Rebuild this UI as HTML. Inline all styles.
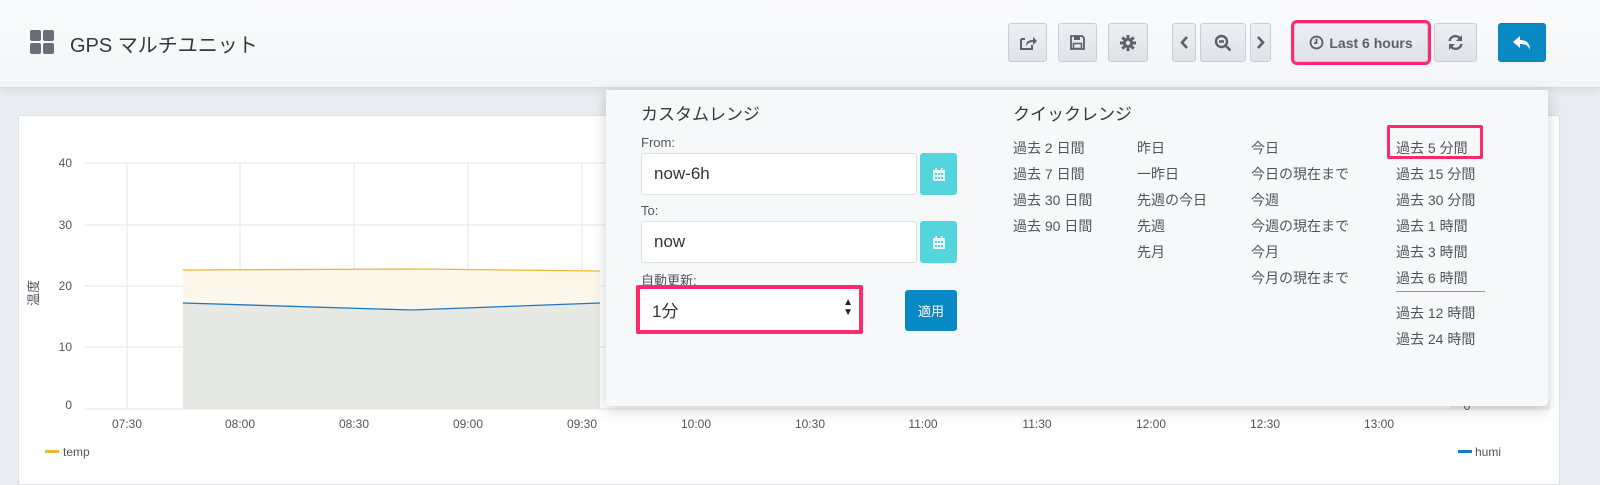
<!DOCTYPE html><html><head><meta charset="utf-8"><style>
*{box-sizing:border-box;margin:0;padding:0}
body{width:1600px;height:480px;overflow:hidden;background:#e9ecf0;font-family:"Liberation Sans","Noto Sans CJK JP",sans-serif;color:#52545c;position:relative}
.abs{position:absolute}
.hdr{left:0;top:0;width:1600px;height:88px;background:linear-gradient(#fafbfc,#f4f5f8);border-bottom:1px solid #d8dbe0;box-shadow:0 2px 8px rgba(0,0,0,.08)}
.btn{position:absolute;top:23px;height:39px;background:linear-gradient(#eceef2,#dfe3e9);border:1px solid #c9ced6;border-radius:3px;display:flex;align-items:center;justify-content:center;color:#5d6068}
.panel{left:18px;top:115px;width:1542px;height:370px;background:#fff;border:1px solid #dde0e5;border-radius:3px}
.lbl{font-size:13px;color:#52545c}
.dd{left:606px;top:90px;width:942px;height:316px;background:#f7f8fa;border-radius:0 0 4px 4px;box-shadow:0 4px 14px rgba(0,0,0,.18)}
.inp{position:absolute;background:#fff;border:1px solid #dcdfe4;border-radius:3px;font-size:17px;color:#33353b;padding-left:12px;display:flex;align-items:center}
.cal{position:absolute;width:37px;height:42px;background:#54d4dc;border-radius:3px;display:flex;align-items:center;justify-content:center}
.q{position:absolute;font-size:14px;color:#52545c;white-space:nowrap}
</style></head><body>
<div class="abs hdr"></div>
<div class="abs" style="left:30px;top:30px;width:24px;height:24px">
<div class="abs" style="left:0;top:0;width:11px;height:11px;background:#6b6e75;border-radius:2px"></div>
<div class="abs" style="left:13px;top:0;width:11px;height:11px;background:#6b6e75;border-radius:2px"></div>
<div class="abs" style="left:0;top:13px;width:11px;height:11px;background:#6b6e75;border-radius:2px"></div>
<div class="abs" style="left:13px;top:13px;width:11px;height:11px;background:#6b6e75;border-radius:2px"></div></div>
<div class="abs" style="left:70px;top:29px;font-size:20px;color:#35373d">GPS マルチユニット</div>

<div class="btn" style="left:1008px;width:39px"><svg width="18" height="16" viewBox="0 0 18 16"><path d="M2 4h4M2 4v10h11v-4" fill="none" stroke="#5d6068" stroke-width="2"/><path d="M7 11c0-5 3-6 7-6V2l4 4-4 4V7c-3 0-5 1-7 4z" fill="#5d6068"/></svg></div>
<div class="btn" style="left:1058px;width:39px"><svg width="15" height="15" viewBox="0 0 15 15"><path d="M1 1h11l2 2v11H1z" fill="none" stroke="#5d6068" stroke-width="1.8"/><rect x="4" y="1" width="6" height="4" fill="#5d6068"/><rect x="3.5" y="8.5" width="8" height="5" fill="none" stroke="#5d6068" stroke-width="1.5"/></svg></div>
<div class="btn" style="left:1108px;width:40px"><svg width="16" height="16" viewBox="0 0 16 16"><circle cx="8" cy="8" r="5" fill="#5d6068"/><g stroke="#5d6068" stroke-width="3"><path d="M8 0v16M0 8h16M2.3 2.3l11.4 11.4M13.7 2.3L2.3 13.7"/></g><circle cx="8" cy="8" r="2.2" fill="#e4e7ec"/></svg></div>
<div class="btn" style="left:1172px;width:24px"><svg width="8" height="13" viewBox="0 0 8 13"><path d="M7 1L2 6.5 7 12" fill="none" stroke="#5d6068" stroke-width="2.6"/></svg></div>
<div class="btn" style="left:1200px;width:46px"><svg width="18" height="18" viewBox="0 0 18 18"><circle cx="7.5" cy="7.5" r="5.5" fill="none" stroke="#5d6068" stroke-width="2.4"/><path d="M5 7.5h5M11.5 11.5l5 5" stroke="#5d6068" stroke-width="2.6"/></svg></div>
<div class="btn" style="left:1250px;width:21px"><svg width="8" height="13" viewBox="0 0 8 13"><path d="M1 1l5 5.5L1 12" fill="none" stroke="#5d6068" stroke-width="2.6"/></svg></div>
<div class="btn" style="left:1294px;width:134px;font-size:14px;font-weight:bold;color:#5d6068;outline:3px solid #ff2a6b;outline-offset:0"><svg width="15" height="15" viewBox="0 0 15 15" style="margin-right:5px"><circle cx="7.5" cy="7.5" r="6" fill="none" stroke="#5d6068" stroke-width="1.8"/><path d="M7.5 3.5v4.5H5" fill="none" stroke="#5d6068" stroke-width="1.8"/></svg>Last 6 hours</div>
<div class="btn" style="left:1434px;width:43px"><svg width="17" height="17" viewBox="0 0 17 17"><path d="M2.5 7a6 6 0 0 1 11-2M14.5 10a6 6 0 0 1-11 2" fill="none" stroke="#5d6068" stroke-width="2.4"/><path d="M15 1v6h-6zM2 16v-6h6z" fill="#5d6068"/></svg></div>
<div class="btn" style="left:1498px;width:48px;background:#0a8ac4;border-color:#0a7fb5"><svg width="20" height="16" viewBox="0 0 20 16"><path d="M8 1L1 7l7 6V9c5 0 8 1 10 6 0-6-3-10-10-10z" fill="#fff"/></svg></div>

<div class="abs panel"></div>
<svg class="abs" style="left:0;top:0" width="1600" height="480">
<g stroke="#e4e6ea" stroke-width="1">
<line x1="85" y1="163" x2="1450" y2="163"/><line x1="85" y1="225" x2="1450" y2="225"/><line x1="85" y1="286" x2="1450" y2="286"/><line x1="85" y1="347" x2="1450" y2="347"/><line x1="85" y1="409" x2="1450" y2="409"/>
<line x1="127" y1="163" x2="127" y2="409"/><line x1="240" y1="163" x2="240" y2="409"/><line x1="354" y1="163" x2="354" y2="409"/><line x1="468" y1="163" x2="468" y2="409"/><line x1="582" y1="163" x2="582" y2="409"/>
</g>
<path d="M183 270L420 269 600 271 600 409 183 409z" fill="#fbf7ea"/>
<path d="M183 303L411 310 600 303 600 409 183 409z" fill="#e7e9e4"/>
<path d="M183 270L420 269 600 271" fill="none" stroke="#eab839" stroke-width="1.3"/>
<path d="M183 303L411 310 600 303" fill="none" stroke="#1f78c1" stroke-width="1.3"/>
<rect x="1450" y="400" width="100" height="10" fill="#eef0f2"/>
<g font-size="12" fill="#52545c" font-family="Liberation Sans">
<text x="72" y="167" text-anchor="end">40</text><text x="72" y="229" text-anchor="end">30</text><text x="72" y="290" text-anchor="end">20</text><text x="72" y="351" text-anchor="end">10</text><text x="72" y="409" text-anchor="end">0</text>
<text x="1467" y="410" text-anchor="middle">0</text>
<g text-anchor="middle"><text x="127" y="428">07:30</text><text x="240" y="428">08:00</text><text x="354" y="428">08:30</text><text x="468" y="428">09:00</text><text x="582" y="428">09:30</text><text x="696" y="428">10:00</text><text x="810" y="428">10:30</text><text x="923" y="428">11:00</text><text x="1037" y="428">11:30</text><text x="1151" y="428">12:00</text><text x="1265" y="428">12:30</text><text x="1379" y="428">13:00</text></g>
<text x="63" y="456">temp</text><text x="1475" y="456">humi</text></g>
<rect x="45" y="450" width="14" height="3" fill="#eab839"/><rect x="1458" y="450" width="14" height="3" fill="#1f78c1"/>
<text x="0" y="0" font-size="13" fill="#52545c" transform="translate(38,306) rotate(-90)" font-family="Liberation Sans,Noto Sans CJK JP,sans-serif">温度</text>
</svg>

<div class="abs dd">
<div class="abs" style="left:35px;top:10px;font-size:17px;color:#35373d">カスタムレンジ</div>
<div class="abs lbl" style="left:35px;top:45px">From:</div>
<div class="inp" style="left:35px;top:63px;width:276px;height:42px">now-6h</div>
<div class="cal" style="left:314px;top:63px"><svg width="12" height="13" viewBox="0 0 12 13"><rect x="0" y="2" width="12" height="11" fill="#fff" opacity=".85"/><g fill="#54d4dc"><rect x="2" y="5" width="2" height="2"/><rect x="5" y="5" width="2" height="2"/><rect x="8" y="5" width="2" height="2"/><rect x="2" y="9" width="2" height="2"/><rect x="5" y="9" width="2" height="2"/><rect x="8" y="9" width="2" height="2"/></g><rect x="2.5" y="0" width="1.5" height="3" fill="#fff"/><rect x="8" y="0" width="1.5" height="3" fill="#fff"/></svg></div>
<div class="abs lbl" style="left:35px;top:113px">To:</div>
<div class="inp" style="left:35px;top:131px;width:276px;height:42px">now</div>
<div class="cal" style="left:314px;top:131px"><svg width="12" height="13" viewBox="0 0 12 13"><rect x="0" y="2" width="12" height="11" fill="#fff" opacity=".85"/><g fill="#54d4dc"><rect x="2" y="5" width="2" height="2"/><rect x="5" y="5" width="2" height="2"/><rect x="8" y="5" width="2" height="2"/><rect x="2" y="9" width="2" height="2"/><rect x="5" y="9" width="2" height="2"/><rect x="8" y="9" width="2" height="2"/></g><rect x="2.5" y="0" width="1.5" height="3" fill="#fff"/><rect x="8" y="0" width="1.5" height="3" fill="#fff"/></svg></div>
<div class="abs lbl" style="left:35px;top:180px">自動更新:</div>
<div class="inp" style="left:30px;top:195px;width:227px;height:49px;border:4px solid #ff2a6b;border-radius:2px">1分<span style="position:absolute;right:6px;top:9px;font-size:10px;line-height:10px;color:#222">▲<br>▼</span></div>
<div class="abs" style="left:299px;top:200px;width:52px;height:41px;background:#0a8ac4;border-radius:3px;color:#fff;font-size:13px;display:flex;align-items:center;justify-content:center">適用</div>
<div class="abs" style="left:407px;top:10px;font-size:17px;color:#35373d">クイックレンジ</div>
<div class="q" style="left:407px;top:45px;line-height:26px">過去 2 日間<br>過去 7 日間<br>過去 30 日間<br>過去 90 日間</div>
<div class="q" style="left:531px;top:45px;line-height:26px">昨日<br>一昨日<br>先週の今日<br>先週<br>先月</div>
<div class="q" style="left:645px;top:45px;line-height:26px">今日<br>今日の現在まで<br>今週<br>今週の現在まで<br>今月<br>今月の現在まで</div>
<div class="q" style="left:790px;top:45px;line-height:26px">過去 5 分間<br>過去 15 分間<br>過去 30 分間<br>過去 1 時間<br>過去 3 時間</div>
<div class="abs" style="left:781px;top:35px;width:96px;height:34px;border:3px solid #ff2a6b;border-radius:2px"></div>
<div class="q" style="left:790px;top:178px">過去 6 時間</div>
<div class="abs" style="left:790px;top:201px;width:89px;height:1px;background:#33b5e5"></div>
<div class="q" style="left:790px;top:210px;line-height:26px">過去 12 時間<br>過去 24 時間</div>
</div>
</body></html>
